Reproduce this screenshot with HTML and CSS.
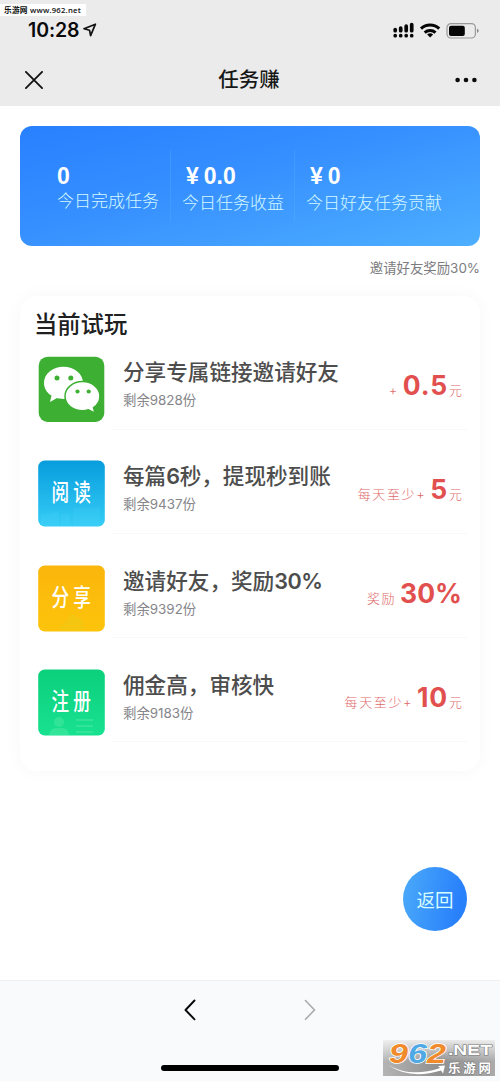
FILE: index.html
```html
<!DOCTYPE html>
<html lang="zh-CN">
<head>
<meta charset="utf-8">
<title>任务赚</title>
<link rel="stylesheet" href="styles.css">
</head>
<body>
<div class="screen">
  <header class="top">
    <span class="source-tag">乐游网 www.962.net</span>
    <div class="status">
      <span class="time">10:28</span>
      <svg class="locate" width="14" height="14" viewBox="0 0 14 14"><path d="M12.400 1.200 1 5.800 6.500 7.200 7.600 12.600Z" fill="none" stroke="#111" stroke-width="1.700" stroke-linejoin="round"/></svg>
      <svg class="signals" width="87" height="18" viewBox="0 0 87 18">
        <g stroke="#050505" stroke-width="3.700" stroke-linecap="round">
          <path d="M2.200 8.500v1.200M7.700 7v2.700M13.200 5.200v4.500M18.700 3.500v6.200M2.200 14.700h.01M7.700 14.700h.01M13.200 14.700h.01M18.700 14.700h.01"/>
        </g>
        <g fill="none" stroke="#050505" stroke-width="3">
          <path d="M28 7.700a13.300 13.300 0 0 1 18.200 0M31.700 11.600a8 8 0 0 1 10.800 0"/>
        </g>
        <path d="m37.100 16.600-3-3a4.300 4.300 0 0 1 6 0Z" fill="#050505"/>
        <rect x="54" y="2.600" width="28.400" height="14.400" rx="4" fill="none" stroke="#999" stroke-width="1.200"/>
        <rect x="56" y="4.700" width="15.800" height="10.200" rx="2" fill="#050505"/>
        <path d="M84 7.700v4.200q1.700-.7 1.700-2.100T84 7.700Z" fill="#888"/>
      </svg>
    </div>
    <div class="nav">
      <svg width="18" height="18" viewBox="0 0 18 18"><path d="m.9.9 16.200 16.200M17.100.9.9 17.100" stroke="#111" stroke-width="1.800" stroke-linecap="round"/></svg>
      <h1 class="nav-title">任务赚</h1>
      <svg width="22" height="6" viewBox="0 0 22 6"><g fill="#0a0a0a"><circle cx="2.600" cy="3" r="2.300"/><circle cx="11" cy="3" r="2.300"/><circle cx="19.400" cy="3" r="2.300"/></g></svg>
    </div>
  </header>

  <main class="content">
    <section class="summary">
      <div class="stat stat-done"><b>0</b><span>今日完成任务</span></div>
      <div class="stat stat-income"><b><i>¥</i>0.0</b><span>今日任务收益</span></div>
      <div class="stat stat-friends"><b><i>¥</i>0</b><span>今日好友任务贡献</span></div>
    </section>
    <p class="tip">邀请好友奖励30%</p>

    <section class="tasks">
      <h2 class="tasks-title">当前试玩</h2>
      <ul class="list">
        <li class="task">
          <svg class="icon" viewBox="0 0 67 67">
            <rect x=".7" y=".7" width="65.600" height="65.200" rx="9" fill="#3db034"/>
            <g fill="#fff"><path d="M25.500 10.800C14.700 10.800 6 18 6 27c0 5.300 2.800 9.700 7.500 12.600L12 46l7-4c2 .6 4 .9 6.500.9 10.800 0 19.500-7.200 19.500-16.100s-8.700-16-19.500-16Z"/>
            <path d="M44.600 25.600c-9.700 0-17.600 6.500-17.600 14.600s7.900 14.500 17.600 14.500c2 0 4-.3 5.800-.9l6.600 3.400-1.500-5.500c4-2.600 6.400-6.800 6.400-11.500 0-8.100-7.700-14.600-17.300-14.600Z" stroke="#3db034" stroke-width="1.500"/></g>
            <g fill="#3db034"><circle cx="19" cy="22" r="2.500"/><circle cx="32.800" cy="22" r="2.500"/><circle cx="39.500" cy="35.500" r="2.100"/><circle cx="50.700" cy="35.500" r="2.100"/></g>
          </svg>
          <div class="info"><h3>分享专属链接邀请好友</h3><p>剩余9828份</p></div>
          <div class="reward"><span>+</span><b>0.5</b><span>元</span></div>
        </li>
        <li class="task">
          <svg class="icon" viewBox="0 0 67 67">
            <defs><linearGradient id="blue" x2="0" y2="1"><stop stop-color="#079cdd"/><stop offset="1" stop-color="#35cdf6"/></linearGradient></defs>
            <rect x=".2" y=".5" width="66.600" height="66" rx="6.500" fill="url(#blue)"/>
            <path d="M3 55 21 51v15H3ZM23 54h9v12h-9ZM35 48h27v18H35Z" fill="#64ddff" opacity=".12"/>
            <g class="icon-text"><text transform="translate(13.500 41) scale(.8 1.060)">阅</text><text transform="translate(35.300 41) scale(.8 1.060)">读</text></g>
          </svg>
          <div class="info"><h3>每篇<em>6</em>秒，提现秒到账</h3><p>剩余9437份</p></div>
          <div class="reward"><span>每天至少+</span><b>5</b><span>元</span></div>
        </li>
        <li class="task">
          <svg class="icon" viewBox="0 0 67 67">
            <defs><linearGradient id="gold" x2="0" y2="1"><stop stop-color="#fbb60c"/><stop offset="1" stop-color="#fdc40b"/></linearGradient></defs>
            <rect x=".2" y=".5" width="66.600" height="66" rx="6.500" fill="url(#gold)"/>
            <path d="M22 66v-5l8-6c0-6 5-7 9-3 5 2 7 5 7 14Z" fill="#e4cf20" opacity=".28"/>
            <g class="icon-text"><text transform="translate(13.500 41) scale(.8 1.060)">分</text><text transform="translate(35.300 41) scale(.8 1.060)">享</text></g>
          </svg>
          <div class="info"><h3>邀请好友，奖励<em>30%</em></h3><p>剩余9392份</p></div>
          <div class="reward"><span>奖励</span><b class="percent">30%</b></div>
        </li>
        <li class="task">
          <svg class="icon" viewBox="0 0 67 67">
            <defs><linearGradient id="green" x2="0" y2="1"><stop stop-color="#0bd07c"/><stop offset="1" stop-color="#18e190"/></linearGradient></defs>
            <rect x=".2" y=".5" width="66.600" height="66" rx="6.500" fill="url(#green)"/>
            <g fill="#65efa9" opacity=".35"><circle cx="21" cy="53" r="5"/><path d="M11 66q1-7 7-7h6q6 0 7 7ZM38 50h17v2H38ZM38 56h17v2H38ZM38 62h17v2H38Z"/></g>
            <g class="icon-text"><text transform="translate(13.500 41) scale(.8 1.060)">注</text><text transform="translate(35.300 41) scale(.8 1.060)">册</text></g>
          </svg>
          <div class="info"><h3>佣金高，审核快</h3><p>剩余9183份</p></div>
          <div class="reward"><span>每天至少+</span><b>10</b><span>元</span></div>
        </li>
      </ul>
    </section>
  </main>

  <button class="back">返回</button>

  <footer class="toolbar">
    <div class="arrows">
      <svg width="12" height="22" viewBox="0 0 12 22"><path d="M10.500 1.500 1.500 11l9 9.300" fill="none" stroke="#080808" stroke-width="1.900" stroke-linecap="round" stroke-linejoin="round"/></svg>
      <svg width="12" height="22" viewBox="0 0 12 22"><path d="m1.500 1.500 9 9.500-9 9.300" fill="none" stroke="#aaa" stroke-width="1.600" stroke-linecap="round" stroke-linejoin="round"/></svg>
    </div>
    <div class="home-bar"></div>
  </footer>

  <svg class="site-logo" width="118" height="41" viewBox="0 0 118 41">
    <defs><linearGradient id="silver" x2="1" y2="0"><stop stop-color="#b4b4b4"/><stop offset=".5" stop-color="#8f8f8f"/><stop offset="1" stop-color="#aaa"/></linearGradient>
    <linearGradient id="silver-fade" x2="0" y2="1"><stop stop-color="#fff" stop-opacity=".8"/><stop offset=".6" stop-color="#fff" stop-opacity="0"/></linearGradient></defs>
    <path d="M1 3h112v36H1Z" fill="url(#silver)"/><path d="M1 3h112v36H1Z" fill="url(#silver-fade)"/>
    <path d="M6 28Q29 41 58 31l-2-2 7-.5-2 8-2-3Q28 43 6 28Z" fill="#fff"/>
    <g class="logo-num"><text x="7" y="25.500" fill="#f18a2b" textLength="19" lengthAdjust="spacingAndGlyphs">9</text><text x="26" y="25.500" fill="#50a9e5" textLength="19" lengthAdjust="spacingAndGlyphs">6</text><text x="45" y="25.500" fill="#f18a2b" textLength="19" lengthAdjust="spacingAndGlyphs">2</text></g>
    <text class="logo-net" x="66" y="17.500" textLength="44" lengthAdjust="spacingAndGlyphs">.NET</text>
    <text class="logo-cn" x="66" y="36" textLength="43">乐游网</text>
  </svg>
</div>
</body>
</html>
```
FILE: styles.css
```css
* { box-sizing: border-box; margin: 0; padding: 0; }
body {
  width: 500px;
  background: #fff;
  font-family: Inter, "Noto Sans CJK SC", sans-serif;
}
.screen {
  position: relative;
  height: 1081px;
  display: flex;
  flex-direction: column;
  overflow: hidden;
}
.top { height: 106px; background: #ebebeb; position: relative; }
.source-tag {
  position: absolute;
  left: 0;
  top: 4px;
  width: 86px;
  height: 12px;
  padding-left: 4px;
  background: #fff;
  color: #111;
  font: 600 7.7px/13px "Open Sans", "Noto Sans CJK SC", sans-serif;
  letter-spacing: 0.22px;
  white-space: nowrap;
}
.status { display: flex; align-items: center; padding: 20px 20px 0 28px; height: 40px; }
.time { font-size: 19.5px; font-weight: 600; line-height: 20px; letter-spacing: -0.1px; color: #0a0a0a; }
.locate { margin-left: 4px; }
.signals { margin-left: auto; }
.nav {
  display: flex;
  align-items: center;
  justify-content: space-between;
  height: 66px;
  padding: 13px 23px 0 25px;
}
.nav-title { font-size: 20.5px; line-height: 28px; font-weight: 500; color: #171717; }
.content { padding: 20px 20px 0; flex: 1; }

.summary {
  display: grid;
  grid-template-columns: 151px 124px 1fr;
  height: 120px;
  padding: 24px 0;
  border-radius: 12px;
  background: linear-gradient(165deg, #2880ff, #3790ff 45%, #4dafff);
  color: #fff;
}
.stat { display: flex; flex-direction: column; padding-top: 14px; border-right: 1px solid rgba(90, 180, 255, .3); }
.stat:last-child { border: 0; }
.stat-done { padding-left: 37px; }
.stat-income, .stat-friends { padding-left: 11px; }
.stat b { font: 700 23px/24px "Liberation Sans", Arial, sans-serif; }
.stat i { font-style: normal; margin: 0 5px 0 4px; }
.stat span { font-size: 17px; line-height: 24px; font-weight: 300; color: #d3f7ff; white-space: nowrap; padding-top: 1px; }
.stat-income span, .stat-friends span { padding-top: 3px; }
.tip { text-align: right; font-size: 13.4px; line-height: 20px; color: #7c7c80; margin-top: 12px; }

.tasks {
  margin-top: 18px;
  height: 475px;
  border-radius: 17px;
  padding: 14px 13px 0 14px;
  box-shadow: 0 0 18px rgba(0, 0, 0, .035);
}
.tasks-title { font-size: 23.3px; font-weight: 500; line-height: 30px; color: #202020; }
.list { list-style: none; padding-top: 16px; }
.task {
  display: grid;
  grid-template-columns: 67px 1fr auto;
  height: 104.33px;
  padding: 0 5px 0 3.5px;
  background: linear-gradient(#f8f8f8, #f8f8f8) 78px 72.5px / 355px 1px no-repeat;
}
.icon { width: 67px; height: 67px; }
.icon-text {
  font: 500 22px "Noto Sans CJK SC", sans-serif;
  fill: #fff;
}
.info { padding: 1px 0 0 18.5px; white-space: nowrap; }
.info h3 { font-size: 21.6px; line-height: 30px; font-weight: 500; color: #4d4d4d; }
.info em { font-style: normal; font-weight: 600; letter-spacing: -0.4px; }
.info p { font-size: 13.4px; line-height: 20px; margin-top: 3px; color: #85858a; }
.reward { display: flex; align-items: baseline; padding-top: 12.5px; color: #e1504e; white-space: nowrap; height: 46px; }
.reward span { font-size: 13px; font-weight: 300; letter-spacing: 1.6px; line-height: 32px; color: #df6a6a; }
.reward span:last-child { letter-spacing: 0; }
.reward b { font-size: 26.5px; font-weight: 700; line-height: 32px; margin: 0 1px 0 4px; letter-spacing: .8px; }
.reward .percent { margin-right: 0; letter-spacing: 0; }

.back {
  position: absolute;
  left: 403px;
  top: 867px;
  width: 64px;
  height: 64px;
  border: 0;
  border-radius: 50%;
  background: linear-gradient(100deg, #4babfa, #2880fb 85%);
  color: #d7fcff;
  font: 400 18.5px/63px "Noto Sans CJK SC", sans-serif;
}
.toolbar { height: 101px; background: #f9fafc; border-top: 1px solid #f0f0f3; }
.arrows { display: flex; justify-content: space-between; width: 132px; margin: 18px auto 0; }
.home-bar { width: 178px; height: 6px; border-radius: 3px; background: #000; margin: 44px auto 0; }
.site-logo { position: absolute; left: 382px; top: 1037px; }
.logo-num { font: italic 700 27px "Liberation Sans", sans-serif; stroke: #fff; stroke-width: 1.5px; paint-order: stroke; }
.logo-net { font: 700 14px "Liberation Sans", sans-serif; fill: #fff; stroke: #777; stroke-width: 1px; paint-order: stroke; }
.logo-cn { font: 700 12.5px "Noto Sans CJK SC", sans-serif; fill: #fff; stroke: #777; stroke-width: 1px; paint-order: stroke; }
```
